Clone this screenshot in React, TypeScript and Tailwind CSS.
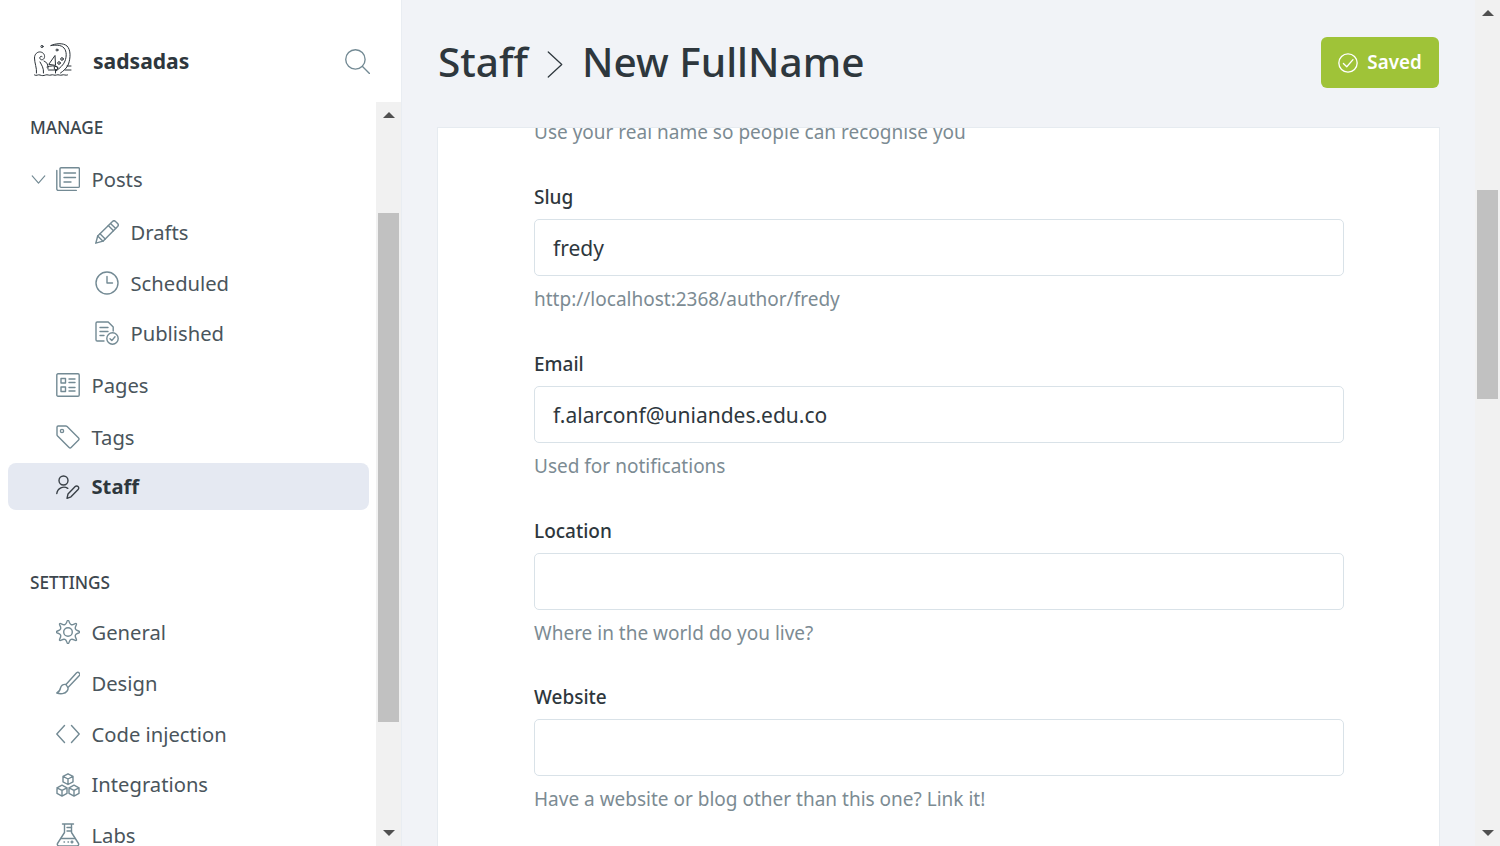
import type { ReactNode } from 'react'

const Ico = ({ children }: { children: ReactNode }) => (
  <svg viewBox="0 0 24 24" fill="none" stroke="#738a94" strokeWidth="1.4" strokeLinecap="round" strokeLinejoin="round" className="w-6 h-6 shrink-0">
    {children}
  </svg>
)

// 8 rounded teeth, smoothed through the midpoints of a star outline
const gearPath = (() => {
  const pts = Array.from({ length: 16 }, (_, i) => {
    const a = (i * Math.PI) / 8 - Math.PI / 2
    const r = i % 2 === 0 ? 13.8 : 6.5
    return [12 + r * Math.cos(a), 12 + r * Math.sin(a)]
  })
  const mid = (a: number[], b: number[]) => `${((a[0] + b[0]) / 2).toFixed(2)} ${((a[1] + b[1]) / 2).toFixed(2)}`
  let d = `M${mid(pts[15], pts[0])}`
  pts.forEach((p, i) => {
    d += `Q${p[0].toFixed(2)} ${p[1].toFixed(2)} ${mid(p, pts[(i + 1) % 16])}`
  })
  return d + 'Z'
})()

const PostsIcon = () => (
  <Ico>
    <rect x="4" y="0.8" width="19.4" height="19.600" rx="1" />
    <path d="M8 6h11.500M8 10.500h11.500M8 15h7M0.800 3.500v18.500a1.500 1.500 0 0 0 1.500 1.500h18" />
  </Ico>
)
const PencilIcon = () => (
  <Ico>
    <path d="M0.800 23.200l1.900-7.200L17.500 1.400a2.200 2.200 0 0 1 3 0l2.100 2.100a2.200 2.200 0 0 1 0 3L8 21.200z" />
    <path d="M2.700 16L8 21.200M5 13.800l5.200 5.200M15.500 3.400l5.200 5.200M13.300 5.600l5.200 5.200" />
  </Ico>
)
const ClockIcon = () => (
  <Ico>
    <circle cx="12" cy="12" r="11" />
    <path d="M12 5.500V12h5.500" />
  </Ico>
)
const PublishedIcon = () => (
  <Ico>
    <path d="M9 20H2.200A1.200 1.200 0 0 1 1 18.800V2.200A1.200 1.200 0 0 1 2.200 1h11l5 5v4" />
    <path d="M5 6.500h8M5 10.500h8M5 14.500h4" />
    <circle cx="17.500" cy="17.500" r="5.700" />
    <path d="M15 17.800l1.800 1.800 3.200-3.800" />
  </Ico>
)
const PagesIcon = () => (
  <Ico>
    <rect x="0.800" y="0.800" width="22.400" height="22.400" rx="1.200" />
    <rect x="5" y="5.500" width="4.500" height="4.500" />
    <rect x="5" y="14" width="4.500" height="4.500" />
    <path d="M13 6h6M13 9.500h6M13 14.500h6M13 18h6" />
  </Ico>
)
const TagIcon = () => (
  <Ico>
    <path d="M1 2.200A1.200 1.200 0 0 1 2.200 1h7.500a2 2 0 0 1 1.400.6l11.500 11.500a1.400 1.400 0 0 1 0 2l-7.500 7.500a1.400 1.400 0 0 1-2 0L1.600 11.100a2 2 0 0 1-.6-1.400z" />
    <circle cx="6" cy="6" r="1.600" />
  </Ico>
)
const StaffIcon = () => (
  <svg viewBox="0 0 24 24" fill="none" stroke="#394047" strokeWidth="1.400" strokeLinecap="round" strokeLinejoin="round" className="w-6 h-6 shrink-0">
    <circle cx="7.500" cy="5.500" r="4.500" />
    <path d="M0.800 18.500a7.200 7.200 0 0 1 11-5.200" />
    <path d="M11 23.300l1-4.300 7.200-7.400a2 2 0 0 1 2.900 0 2 2 0 0 1 0 2.900L15 21.800z" />
  </svg>
)
const GearIcon = () => (
  <Ico>
    <path d={gearPath} />
    <circle cx="12" cy="12" r="4.300" />
  </Ico>
)
const BrushIcon = () => (
  <Ico>
    <path d="M10 13.500L20.600 1.800a2 2 0 0 1 2.800 2.800L12.500 16" />
    <path d="M10 13.500c-3-.6-5 1-5.500 3.500-.4 2.200-1.600 4-3.700 5 3.500 1.300 8.300 1 10.300-2 1.100-1.600 1.300-3 .4-4z" />
  </Ico>
)
const CodeIcon = () => (
  <Ico>
    <path d="M8.500 3.500L.8 12l7.700 8.500M15.500 3.500L23.200 12l-7.700 8.500" />
  </Ico>
)
const CubesIcon = () => (
  <Ico>
    <path d="M12 .8l5 2.600v5.500l-5 2.600-5-2.600V3.400zM7 3.400l5 2.600 5-2.600M12 6v5.500" />
    <path d="M6 12.200l5 2.600v5.600l-5 2.700-5-2.700v-5.600zM1 14.800l5 2.600 5-2.600M6 17.400V23" />
    <path d="M18 12.200l5 2.600v5.600l-5 2.700-5-2.700v-5.600zM13 14.800l5 2.600 5-2.600M18 17.400V23" />
  </Ico>
)
const FlaskIcon = () => (
  <Ico>
    <path d="M6.500 1h11M8.500 1v8.500L1.500 20.500A1.700 1.700 0 0 0 3 23h18a1.700 1.700 0 0 0 1.500-2.500l-7-11V1" />
    <path d="M11 4.500h4.500M11 8h4.500M5 15.500h14M8 19h.5M12 19h.5M16 18v2M15 19h2" />
  </Ico>
)

const Logo = () => (
  <svg viewBox="0 0 38 34" fill="none" stroke="#2b3238" strokeWidth="1" strokeLinecap="round" strokeLinejoin="round" className="w-[38px] h-[34px] shrink-0">
    <circle cx="8" cy="3.500" r="1.100" />
    <circle cx="23" cy="7" r="1" />
    {/* big tentacle */}
    <path d="M17 2.500C21 .5 29-.5 33 3c4 4 3.500 12 1.500 18-1.500 4-5 7-8 9" />
    <path d="M17 2.500C21 2 27 1.500 30 5c3 3.500 2.500 9 1 13-1.500 4-5 7-9 10" />
    <circle cx="28" cy="16" r="1.300" />
    <circle cx="25" cy="20" r="1.300" />
    <circle cx="22" cy="25" r="1.800" />
    {/* curled tentacle */}
    <path d="M2.500 30C3 25 .5 20 .5 15c0-4 3-6.500 6-6 3.500.5 5 4 3.500 6.500-1.200 2-4 1.500-4.200-.5-.1-1.400 1.200-2.200 2.200-1.500" />
    <path d="M9.500 30c.5-5-2-8-3.500-11M10 18c3 1 4.500 4 4 8" />
    {/* mast and sail */}
    <path d="M15 21l6-8.500.5 9.500zM13 24c4-1.500 7-1.500 10 0M14.500 27h7v3" />
    <path d="M33 23h4M31 27h6" />
    <path d="M.5 32c2 1.300 3.500-.8 5.500 0s3.500.8 5.500 0 3.500.8 5.500 0 3.500.8 5.500 0 3.500.8 5.500 0 3.500.8 5.500 0" />
  </svg>
)

const ScrollBar = ({ thumbTop, thumbHeight }: { thumbTop: string; thumbHeight: string }) => (
  <div className="w-[25px] h-full bg-[#f1f1f1] flex flex-col items-center shrink-0">
    <div className={`${thumbTop} flex justify-center`}>
      <div className="w-0 h-0 border-x-[6px] border-x-transparent border-b-[6px] border-b-[#505050]" />
    </div>
    <div className={`w-[21px] ${thumbHeight} bg-[#c1c1c1]`} />
    <div className="mt-auto pb-[10px] flex justify-center">
      <div className="w-0 h-0 border-x-[6px] border-x-transparent border-t-[6px] border-t-[#505050]" />
    </div>
  </div>
)

const NavItem = ({ icon, label, sub }: { icon: ReactNode; label: string; sub?: boolean }) => (
  <div className={`flex items-center h-[50.700px] gap-[11.500px] ${sub ? 'pl-[95px]' : 'pl-[56px]'}`}>
    {icon}
    <span className="text-[20.200px] text-[#4a555c]">{label}</span>
  </div>
)

const Field = ({ label, value, hint }: { label: string; value?: string; hint: string }) => (
  <div className="mb-[38.800px]">
    <div className="text-[19px] leading-[26px] font-medium text-[#2e373d] mb-[9px]">{label}</div>
    <div className="h-[57px] border border-[#d9e2e8] rounded-[5px] bg-white px-[18px] pt-[2px] flex items-center text-[21px] text-[#2e373d]">{value}</div>
    <div className="text-[19px] leading-[26px] text-[#7c8b93] mt-[10px]">{hint}</div>
  </div>
)

export default function App() {
  return (
    <div className="h-screen flex overflow-hidden bg-[#f1f3f7] text-[#2e373d] font-['Noto_Sans','Open_Sans',sans-serif]">
      <aside className="w-[402px] shrink-0 h-full bg-white border-r border-[#e9edf2] flex flex-col">
        <div className="h-[102px] shrink-0 flex items-center justify-between pl-[34px] pr-[31px] pt-[18px]">
          <div className="flex items-center gap-[21px]">
            <Logo />
            <span className="text-[21.100px] font-bold text-[#2e373d] mt-[2px]">sadsadas</span>
          </div>
          <svg viewBox="0 0 24 24" fill="none" stroke="#738a94" strokeWidth="1.300" strokeLinecap="round" className="w-[25px] h-[25px] mt-[2px]">
            <circle cx="10" cy="10" r="9.300" />
            <path d="M16.800 16.800L23.500 23.500" />
          </svg>
        </div>
        <div className="flex-1 min-h-0 flex">
          <nav className="flex-1 min-w-0 overflow-hidden">
            <div className="pl-[30px] text-[17.200px] leading-[24px] text-[#3d474e] mt-[14px] font-medium">MANAGE</div>
            <div className="mt-[14px] relative">
              <svg viewBox="0 0 16 10" fill="none" stroke="#738a94" strokeWidth="1.300" strokeLinecap="round" strokeLinejoin="round" className="absolute left-[31px] top-[21px] w-[15px] h-[9px]">
                <path d="M1 1l7 8 7-8" />
              </svg>
              <NavItem icon={<PostsIcon />} label="Posts" />
              <div className="h-[2px]" />
              <NavItem sub icon={<PencilIcon />} label="Drafts" />
              <NavItem sub icon={<ClockIcon />} label="Scheduled" />
              <NavItem sub icon={<PublishedIcon />} label="Published" />
              <div className="h-[1px]" />
              <NavItem icon={<PagesIcon />} label="Pages" />
              <div className="h-[1px]" />
              <NavItem icon={<TagIcon />} label="Tags" />
              <div className="ml-[8px] mr-[7px] h-[47px] rounded-[8px] bg-[#e5e9f2] flex items-center pl-[48px] gap-[11.500px] mt-[1px]">
                <StaffIcon />
                <span className="text-[20.200px] font-bold text-[#2e373d]">Staff</span>
              </div>
            </div>
            <div className="pl-[30px] text-[17.200px] leading-[24px] text-[#3d474e] mt-[61px] font-medium">SETTINGS</div>
            <div className="mt-[12px]">
              <NavItem icon={<GearIcon />} label="General" />
              <NavItem icon={<BrushIcon />} label="Design" />
              <NavItem icon={<CodeIcon />} label="Code injection" />
              <NavItem icon={<CubesIcon />} label="Integrations" />
              <NavItem icon={<FlaskIcon />} label="Labs" />
            </div>
          </nav>
          <ScrollBar thumbTop="h-[111px] pt-[10px]" thumbHeight="h-[509px]" />
        </div>
      </aside>

      <main className="flex-1 min-w-0 h-full flex flex-col">
        <header className="h-[127px] shrink-0 pl-[36px] pr-[36px] flex items-center justify-between pb-[2px]">
          <h1 className="flex items-center text-[40.600px] font-medium text-[#2e373d] leading-none -mt-[1px]">
            Staff
            <svg viewBox="0 0 16 28" fill="none" stroke="#2e373d" strokeWidth="1.300" strokeLinecap="round" strokeLinejoin="round" className="w-[16px] h-[27px] mx-[19px] mt-[4px]">
              <path d="M1 1l14 13L1 27" />
            </svg>
            New FullName
          </h1>
          <button className="w-[118px] h-[51px] rounded-[6px] bg-[#9fc338] flex items-center justify-center gap-[9px] text-white text-[18.800px] font-semibold">
            <svg viewBox="0 0 24 24" fill="none" stroke="#fff" strokeWidth="1.600" strokeLinecap="round" strokeLinejoin="round" className="w-[20px] h-[20px]">
              <circle cx="12" cy="12" r="11" />
              <path d="M6.500 12.500l4 4 7.500-8.500" />
            </svg>
            Saved
          </button>
        </header>
        <div className="flex-1 min-h-0 pl-[35px] pr-[35px]">
          <div className="h-full bg-white border-t border-x border-[#e6ebf0] overflow-hidden pl-[96px] pr-[95px]">
            <div className="text-[19px] leading-[26px] text-[#7c8b93] -mt-[9px] mb-[39px]">Use your real name so people can recognise you</div>
            <Field label="Slug" value="fredy" hint="http://localhost:2368/author/fredy" />
            <Field label="Email" value="f.alarconf@uniandes.edu.co" hint="Used for notifications" />
            <Field label="Location" hint="Where in the world do you live?" />
            <Field label="Website" hint="Have a website or blog other than this one? Link it!" />
          </div>
        </div>
      </main>

      <ScrollBar thumbTop="h-[190px] pt-[10px]" thumbHeight="h-[209px]" />
    </div>
  )
}
